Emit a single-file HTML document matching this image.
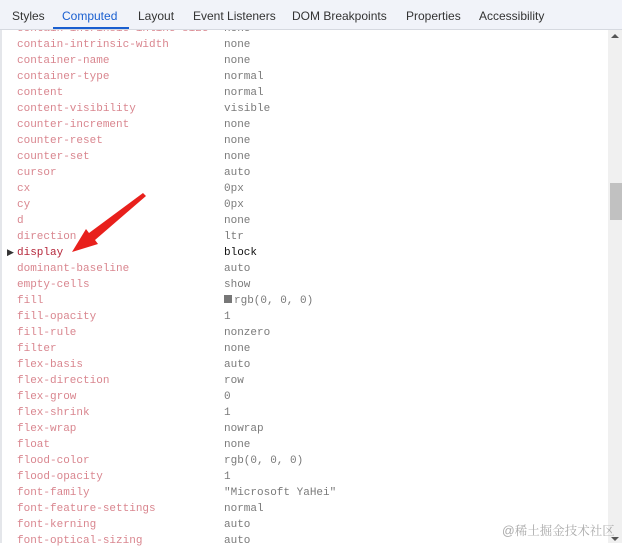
<!DOCTYPE html>
<html><head><style>
*{margin:0;padding:0;box-sizing:border-box}
body{width:622px;height:543px;overflow:hidden;background:#fff;position:relative;font-family:"Liberation Sans",sans-serif}
.tabs{position:absolute;left:0;top:0;width:622px;height:30px;background:#f1f3f9;border-bottom:1px solid #d6d9e0}
.tab{position:absolute;top:9px;font-size:12px;color:#333}
.tab.act{color:#1a5fd0}
.ul{position:absolute;left:53px;width:76px;top:27px;height:2px;background:#1a5fd0}
.leftb{position:absolute;left:0;top:30px;width:2px;height:513px;background:#e4e6ea}
.row{position:absolute;left:0;height:16px;font-family:"Liberation Mono",monospace;font-size:11px;line-height:16px;white-space:pre;margin-top:1px}
.n{position:absolute;left:17px;color:#d9868f}
.v{position:absolute;left:224px;color:#7a7a7a}
.sb{position:absolute;left:608px;top:30px;width:14px;height:513px;background:#f0f0f0}
.thumb{position:absolute;left:610px;top:183px;width:12px;height:37px;background:#c1c1c1}
</style></head><body>
<div class="row" style="top:20px"><span class="n">contain-intrinsic-inline-size</span><span class="v">none</span></div>
<div class="tabs">
<span class="tab" style="left:12px">Styles</span>
<span class="tab act" style="left:62px">Computed</span>
<span class="tab" style="left:138px">Layout</span>
<span class="tab" style="left:193px">Event Listeners</span>
<span class="tab" style="left:292px">DOM Breakpoints</span>
<span class="tab" style="left:406px">Properties</span>
<span class="tab" style="left:479px">Accessibility</span>
<div class="ul"></div>
</div>
<div class="leftb"></div>
<div class="row" style="top:36px"><span class="n">contain-intrinsic-width</span><span class="v">none</span></div>
<div class="row" style="top:52px"><span class="n">container-name</span><span class="v">none</span></div>
<div class="row" style="top:68px"><span class="n">container-type</span><span class="v">normal</span></div>
<div class="row" style="top:84px"><span class="n">content</span><span class="v">normal</span></div>
<div class="row" style="top:100px"><span class="n">content-visibility</span><span class="v">visible</span></div>
<div class="row" style="top:116px"><span class="n">counter-increment</span><span class="v">none</span></div>
<div class="row" style="top:132px"><span class="n">counter-reset</span><span class="v">none</span></div>
<div class="row" style="top:148px"><span class="n">counter-set</span><span class="v">none</span></div>
<div class="row" style="top:164px"><span class="n">cursor</span><span class="v">auto</span></div>
<div class="row" style="top:180px"><span class="n">cx</span><span class="v">0px</span></div>
<div class="row" style="top:196px"><span class="n">cy</span><span class="v">0px</span></div>
<div class="row" style="top:212px"><span class="n">d</span><span class="v">none</span></div>
<div class="row" style="top:228px"><span class="n">direction</span><span class="v">ltr</span></div>
<div class="row" style="top:244px"><span style="position:absolute;left:7px;top:0;font-size:9px;color:#333">&#9654;</span><span class="n" style="color:#b5263a">display</span><span class="v" style="color:#111">block</span></div>
<div class="row" style="top:260px"><span class="n">dominant-baseline</span><span class="v">auto</span></div>
<div class="row" style="top:276px"><span class="n">empty-cells</span><span class="v">show</span></div>
<div class="row" style="top:292px"><span class="n">fill</span><span class="v"><span style="display:inline-block;width:8px;height:8px;background:#777;margin-right:2px"></span>rgb(0, 0, 0)</span></div>
<div class="row" style="top:308px"><span class="n">fill-opacity</span><span class="v">1</span></div>
<div class="row" style="top:324px"><span class="n">fill-rule</span><span class="v">nonzero</span></div>
<div class="row" style="top:340px"><span class="n">filter</span><span class="v">none</span></div>
<div class="row" style="top:356px"><span class="n">flex-basis</span><span class="v">auto</span></div>
<div class="row" style="top:372px"><span class="n">flex-direction</span><span class="v">row</span></div>
<div class="row" style="top:388px"><span class="n">flex-grow</span><span class="v">0</span></div>
<div class="row" style="top:404px"><span class="n">flex-shrink</span><span class="v">1</span></div>
<div class="row" style="top:420px"><span class="n">flex-wrap</span><span class="v">nowrap</span></div>
<div class="row" style="top:436px"><span class="n">float</span><span class="v">none</span></div>
<div class="row" style="top:452px"><span class="n">flood-color</span><span class="v">rgb(0, 0, 0)</span></div>
<div class="row" style="top:468px"><span class="n">flood-opacity</span><span class="v">1</span></div>
<div class="row" style="top:484px"><span class="n">font-family</span><span class="v">"Microsoft YaHei"</span></div>
<div class="row" style="top:500px"><span class="n">font-feature-settings</span><span class="v">normal</span></div>
<div class="row" style="top:516px"><span class="n">font-kerning</span><span class="v">auto</span></div>
<div class="row" style="top:532px"><span class="n">font-optical-sizing</span><span class="v">auto</span></div>
<svg style="position:absolute;left:0;top:0" width="622" height="543">
<polygon points="146,196 95,240 98,244 72,252 86,229 89,233 143,193" fill="#e8201c"/>
</svg>
<div class="sb"></div>
<div style="position:absolute;left:611px;top:34px;width:0;height:0;border-left:4px solid transparent;border-right:4px solid transparent;border-bottom:4px solid #555"></div>
<div class="thumb"></div>
<div style="position:absolute;left:611px;top:537px;width:0;height:0;border-left:4px solid transparent;border-right:4px solid transparent;border-top:4px solid #555"></div>
<div style="position:absolute;left:502px;top:521px;font-size:12.5px;color:#aaa;font-family:'Liberation Sans','Noto Serif CJK SC',serif">@稀土掘金技术社区</div>
</body></html>
